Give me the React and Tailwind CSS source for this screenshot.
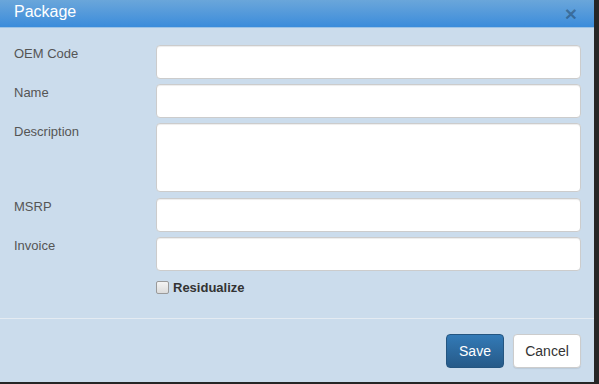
import React from 'react';

const fields = [
  { label: 'OEM Code', h: 'h-[34px]' },
  { label: 'Name', h: 'h-[34px]' },
  { label: 'Description', h: 'h-[69px]', area: true },
  { label: 'MSRP', h: 'h-[34px]' },
  { label: 'Invoice', h: 'h-[34px]' },
];

export default function App() {
  return (
    <div className="w-[599px] h-[384px] bg-[#262626] font-['Liberation_Sans',Arial,sans-serif]">
      <div className="w-[594px] h-[382px] flex flex-col bg-[#cbdcec]">
        {/* Header */}
        <div className="h-[28px] shrink-0 flex items-start justify-between pl-[14px] pr-[17px] pt-[1px] bg-gradient-to-b from-[#6aa6da] to-[#3a8cdb] border-b border-[#9cc3e6]">
          <h4 className="text-[16px] leading-[22px] text-white">Package</h4>
          <button type="button" className="text-[21px] leading-[26px] font-bold text-black/30">×</button>
        </div>

        {/* Body */}
        <div className="flex flex-col pt-[17px] pl-[14px] pr-[13px]">
          {fields.map((f, i) => (
            <div key={f.label} className={`flex ${i === 3 ? 'mt-[6px]' : i > 0 ? 'mt-[5px]' : ''}`}>
              <label className="w-[142px] shrink-0 pt-[1px] text-[13px] leading-[16px] text-[#555]">{f.label}</label>
              {f.area ? (
                <textarea className={`flex-1 ${f.h} resize-none rounded-[4px] border border-[#ccc] bg-white shadow-[inset_0_1px_1px_rgba(0,0,0,0.075)]`} />
              ) : (
                <input type="text" className={`flex-1 ${f.h} rounded-[4px] border border-[#ccc] bg-white shadow-[inset_0_1px_1px_rgba(0,0,0,0.075)]`} />
              )}
            </div>
          ))}
          <div className="flex items-center mt-[10px] pl-[142px] h-[13px]">
            <span className="w-[13px] h-[13px] rounded-[2px] border border-[#9a9a9a] bg-gradient-to-b from-[#f4f4f4] to-[#dcdcdc]" />
            <span className="ml-[4px] text-[13px] leading-[16px] font-bold text-[#333]">Residualize</span>
          </div>
        </div>

        {/* Footer */}
        <div className="mt-[24px] border-t border-[#e4ebf2] flex justify-end gap-[9px] pt-[15px] pr-[13px]">
          <button type="button" className="w-[58px] h-[34px] rounded-[4px] border border-[#245580] bg-gradient-to-b from-[#337ab7] to-[#265a88] text-[14px] text-white">Save</button>
          <button type="button" className="w-[68px] h-[34px] rounded-[4px] border border-[#ccc] bg-white text-[14px] text-[#333] shadow-[0_1px_1px_rgba(0,0,0,0.08)]">Cancel</button>
        </div>
      </div>
    </div>
  );
}
